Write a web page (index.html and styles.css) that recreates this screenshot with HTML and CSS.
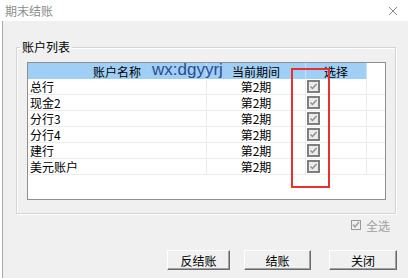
FILE: index.html
```html
<!DOCTYPE html>
<html lang="zh-CN">
<head>
    <meta charset="UTF-8">
    <title>期末结账</title>
    <link rel="stylesheet" href="styles.css">
</head>
<body>
<div class="titlebar">
    <span class="title">期末结账</span>
    <svg class="close" width="10" height="10" viewBox="0 0 10 10">
        <path d="M1 1 L9 9 M9 1 L1 9" stroke="#8a8a8a" stroke-width="1" fill="none"/>
    </svg>
</div>

<div class="frame">
    <fieldset class="group">
        <legend>账户列表</legend>
        <div class="grid">
            <div class="row head">
                <div class="cell">账户名称</div>
                <div class="cell">当前期间</div>
                <div class="cell">选择</div>
                <div class="cell blank"></div>
            </div>
            <div class="row">
                <div class="cell name">总行</div>
                <div class="cell">第2期</div>
                <div class="cell pick"><svg class="chk" width="13" height="13" viewBox="0 0 13 13"><rect x="1" y="1" width="11" height="11" fill="#ebebeb" stroke="#7f7f7f" stroke-width="2"/><path d="M3.5 6.5 L5.5 8.5 L9.5 4" stroke="#8c8c8c" stroke-width="1.3" fill="none"/></svg></div>
                <div class="cell blank"></div>
            </div>
            <div class="row">
                <div class="cell name">现金2</div>
                <div class="cell">第2期</div>
                <div class="cell pick"><svg class="chk" width="13" height="13" viewBox="0 0 13 13"><rect x="1" y="1" width="11" height="11" fill="#ebebeb" stroke="#7f7f7f" stroke-width="2"/><path d="M3.5 6.5 L5.5 8.5 L9.5 4" stroke="#8c8c8c" stroke-width="1.3" fill="none"/></svg></div>
                <div class="cell blank"></div>
            </div>
            <div class="row">
                <div class="cell name">分行3</div>
                <div class="cell">第2期</div>
                <div class="cell pick"><svg class="chk" width="13" height="13" viewBox="0 0 13 13"><rect x="1" y="1" width="11" height="11" fill="#ebebeb" stroke="#7f7f7f" stroke-width="2"/><path d="M3.5 6.5 L5.5 8.5 L9.5 4" stroke="#8c8c8c" stroke-width="1.3" fill="none"/></svg></div>
                <div class="cell blank"></div>
            </div>
            <div class="row">
                <div class="cell name">分行4</div>
                <div class="cell">第2期</div>
                <div class="cell pick"><svg class="chk" width="13" height="13" viewBox="0 0 13 13"><rect x="1" y="1" width="11" height="11" fill="#ebebeb" stroke="#7f7f7f" stroke-width="2"/><path d="M3.5 6.5 L5.5 8.5 L9.5 4" stroke="#8c8c8c" stroke-width="1.3" fill="none"/></svg></div>
                <div class="cell blank"></div>
            </div>
            <div class="row">
                <div class="cell name">建行</div>
                <div class="cell">第2期</div>
                <div class="cell pick"><svg class="chk" width="13" height="13" viewBox="0 0 13 13"><rect x="1" y="1" width="11" height="11" fill="#ebebeb" stroke="#7f7f7f" stroke-width="2"/><path d="M3.5 6.5 L5.5 8.5 L9.5 4" stroke="#8c8c8c" stroke-width="1.3" fill="none"/></svg></div>
                <div class="cell blank"></div>
            </div>
            <div class="row">
                <div class="cell name">美元账户</div>
                <div class="cell">第2期</div>
                <div class="cell pick"><svg class="chk" width="13" height="13" viewBox="0 0 13 13"><rect x="1" y="1" width="11" height="11" fill="#ebebeb" stroke="#7f7f7f" stroke-width="2"/><path d="M3.5 6.5 L5.5 8.5 L9.5 4" stroke="#8c8c8c" stroke-width="1.3" fill="none"/></svg></div>
                <div class="cell blank"></div>
            </div>

            <!-- overlays on the screenshot -->
            <span class="watermark">wx:dgyyrj</span>
            <span class="highlight"></span>
        </div>
    </fieldset>

    <div class="select-all">
        <svg width="10" height="10" viewBox="0 0 10 10"><rect x="0.5" y="0.5" width="9" height="9" fill="#f0f0f0" stroke="#9a9a9a"/><path d="M2 4.5 L4 7 L8 2" stroke="#9a9a9a" stroke-width="1.3" fill="none"/></svg>
        <span>全选</span>
    </div>

    <div class="buttons">
        <button class="btn btn-unclose">反结账</button>
        <button class="btn btn-close-acc">结账</button>
        <button class="btn btn-exit">关闭</button>
    </div>
</div>
</body>
</html>
```

FILE: styles.css
```css
body {
    margin: 0;
    width: 408px;
    height: 278px;
    overflow: hidden;
    background-color: #fff;
    font-family: "Noto Sans CJK SC", sans-serif;
    font-size: 12px;
    color: #000;
}
.titlebar {
    height: 21px;
    display: flex;
    align-items: center;
    justify-content: space-between;
    padding: 0 10px 0 5px;
    background-color: #fff;
}
.title {
    color: #8c8c8c;
    font-size: 12px;
    line-height: 14px;
}
.close {
    margin-top: 1px;
}
.frame {
    margin-left: 2px;
    height: 257px;
    border-left: 1px solid #a9a9a9;
    background-color: #f0f0f0;
    overflow: hidden;
}
.group {
    width: 366px;
    margin: 18px 0 0 13px;
    padding: 7px 9px 13px 3px;
    border: 1px solid #d5d5d5;
    box-shadow: inset 1px 1px 0 #fff, 1px 1px 0 #fff;
}
.group legend {
    padding: 0 2px;
    line-height: 16px;
    font-size: 12px;
}
.grid {
    position: relative;
    width: 357px;
    height: 136px;
    margin-left: 7px;
    border: 1px solid #8f8f8f;
    background-color: #fff;
}
.row {
    display: grid;
    grid-template-columns: 179px 99px 61px 1fr;
    height: 16px;
}
.cell {
    display: flex;
    align-items: center;
    justify-content: center;
    line-height: 15px;
    border-right: 1px solid #ececec;
    border-bottom: 1px solid #ececec;
}
.cell.name {
    justify-content: flex-start;
    padding-left: 2px;
}
.cell.pick {
    justify-content: flex-start;
    padding-left: 1px;
}
.cell.blank {
    border-right: none;
}
.head .cell {
    background-color: #a0cff6;
    border-right: 1px solid #c9e2f7;
    border-bottom: none;
}
.head .cell.blank {
    background-color: #fff;
    border-right: none;
}
.watermark {
    position: absolute;
    left: 124px;
    top: -3px;
    font-family: "Liberation Sans", Arial, sans-serif;
    font-size: 17px;
    line-height: 20px;
    color: #2a4c90;
}
.highlight {
    position: absolute;
    left: 263px;
    top: 5px;
    width: 35px;
    height: 116px;
    border: 2px solid #e8302e;
}
.select-all {
    display: flex;
    align-items: center;
    justify-content: flex-end;
    gap: 5px;
    height: 16px;
    margin-top: 3px;
    padding-right: 18px;
    color: #a0a0a0;
}
.buttons {
    display: flex;
    justify-content: flex-end;
    margin-top: 17px;
    padding-right: 11px;
}
.btn {
    height: 20px;
    padding: 0;
    margin-left: 14px;
    font-family: "Noto Sans CJK SC", sans-serif;
    font-size: 12px;
    color: #000;
    background-color: #f0f0f0;
    border: 1px solid;
    border-color: #fff #6a6a6a #6a6a6a #fff;
    box-shadow: inset -1px -1px 0 #a0a0a0;
}
.btn-unclose {
    width: 63px;
}
.btn-close-acc {
    width: 67px;
}
.btn-exit {
    width: 68px;
    margin-left: 18px;
}
```
